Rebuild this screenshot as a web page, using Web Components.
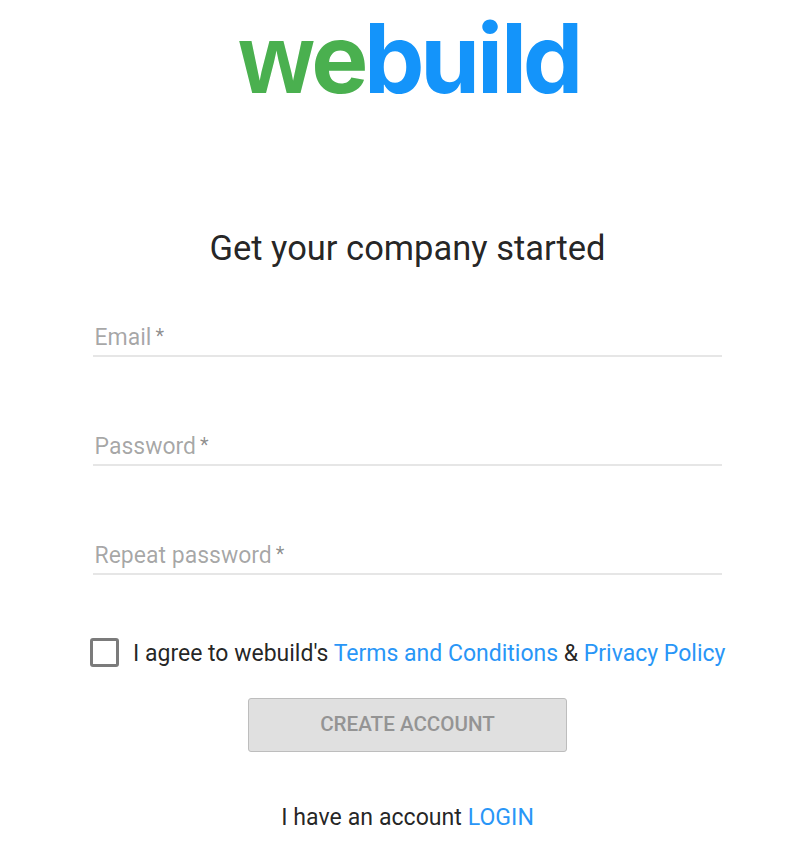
<!DOCTYPE html>
<html lang="en">
<head>
<meta charset="utf-8">
<title>webuild</title>
<style>
  body {
    margin: 0;
    background: #ffffff;
    font-family: Roboto, sans-serif;
    color: rgba(0, 0, 0, 0.87);
  }
</style>
</head>
<body>
<signup-page>
  <brand-logo slot="logo"></brand-logo>
  <span slot="title">Get your company started</span>
  <text-field label="Email"></text-field>
  <text-field label="Password" type="password"></text-field>
  <text-field label="Repeat password" type="password"></text-field>
  <check-box>I agree to webuild's <text-link>Terms and Conditions</text-link> &amp; <text-link>Privacy Policy</text-link></check-box>
  <submit-button>CREATE ACCOUNT</submit-button>
  <span slot="footer">I have an account <text-link>LOGIN</text-link></span>
</signup-page>
<script>
class BrandLogo extends HTMLElement {
  connectedCallback() {
    this.attachShadow({ mode: 'open' });
    this.shadowRoot.innerHTML = `
      <style>
        :host {
            display: block;
            width: 340px;
            height: 80px;
        }
        svg {
            display: block;
            overflow: visible;
        }
        text {
            font: 700 96px Inter, sans-serif;
        }
        .we {
            fill: #4ab04f;
        }
        .w {
            font: 700 98px "Liberation Sans", sans-serif;
        }
        .build {
            fill: #1494fa;
        }
      </style>
      <svg width="340" height="80" viewBox="239 18 340 80" role="img">
        <text class="we" y="92.5"><tspan class="w" x="239.5" textLength="74" lengthAdjust="spacingAndGlyphs">w</tspan><tspan x="311.3">e</tspan></text>
        <text class="build" x="364 420.3 477 501 522.8" y="92.5">build</text>
      </svg>
    `;
  }
}
customElements.define('brand-logo', BrandLogo);

class TextLink extends HTMLElement {
  connectedCallback() {
    this.attachShadow({ mode: 'open' });
    this.shadowRoot.innerHTML = `
      <style>
        :host {
            display: inline;
        }
        a {
            color: #2996f7;
            text-decoration: none;
        }
      </style>
      <a href="#"><slot></slot></a>
    `;
  }
}
customElements.define('text-link', TextLink);

class TextField extends HTMLElement {
  connectedCallback() {
    const type = this.getAttribute('type') || 'text';
    this.attachShadow({ mode: 'open' });
    this.shadowRoot.innerHTML = `
      <style>
        :host {
            display: block;
            margin-bottom: 70px;
        }
        :host(:last-of-type) {
            margin-bottom: 62px;
        }
        label {
            display: grid;
            height: 35px;
            padding: 2px 0 0 1.5px;
            border-bottom: 2px solid #e6e6e6;
            font-size: 23px;
            line-height: 36px;
            color: rgba(0, 0, 0, 0.36);
        }
        span, input {
            grid-area: 1 / 1;
        }
        small {
            margin-left: -1px;
            font-size: 20px;
            line-height: 1;
            vertical-align: 2px;
            color: rgba(0, 0, 0, 0.45);
        }
        input {
            border: 0;
            padding: 0;
            background: none;
            font: inherit;
            outline: none;
        }
      </style>
      <label><span>${this.getAttribute('label')}<small> *</small></span><input type="${type}"></label>
    `;
  }
}
customElements.define('text-field', TextField);

class CheckBox extends HTMLElement {
  connectedCallback() {
    this.attachShadow({ mode: 'open' });
    this.shadowRoot.innerHTML = `
      <style>
        :host {
            display: flex;
            align-items: center;
            gap: 14px;
            height: 30px;
            margin-left: -3px;
            font-size: 23px;
            line-height: 30px;
            white-space: nowrap;
        }
        .box {
            flex: none;
            box-sizing: border-box;
            width: 29px;
            height: 29px;
            border: 3px solid #7b7b7b;
            border-radius: 3px;
        }
        .text {
            padding-top: 3px;
        }
      </style>
      <span class="box" role="checkbox" aria-checked="false"></span>
      <span class="text"><slot></slot></span>
    `;
  }
}
customElements.define('check-box', CheckBox);

class SubmitButton extends HTMLElement {
  connectedCallback() {
    this.attachShadow({ mode: 'open' });
    this.shadowRoot.innerHTML = `
      <style>
        :host {
            display: block;
            width: 319px;
            margin: 31px auto 0;
        }
        button {
            display: block;
            width: 100%;
            height: 54px;
            padding: 0 0 3px;
            border: 1px solid #bdbdbd;
            border-radius: 3px;
            background: #e0e0e0;
            color: #949494;
            font: 500 20.6px Roboto, sans-serif;
        }
      </style>
      <button disabled><slot></slot></button>
    `;
  }
}
customElements.define('submit-button', SubmitButton);

class SignupPage extends HTMLElement {
  connectedCallback() {
    this.attachShadow({ mode: 'open' });
    this.shadowRoot.innerHTML = `
      <style>
        :host {
            display: block;
            box-sizing: border-box;
            width: 629px;
            height: 864px;
            margin-left: 93px;
            padding-top: 18px;
        }
        header {
            display: flex;
            justify-content: center;
            padding-left: 3px;
        }
        h1 {
            margin: 129px 0 49px;
            font-size: 34.5px;
            font-weight: 400;
            line-height: 42px;
            text-align: center;
        }
        footer {
            margin-top: 51px;
            font-size: 23.1px;
            line-height: 30px;
            word-spacing: 0.2px;
            text-align: center;
        }
      </style>
      <header><slot name="logo"></slot></header>
      <h1><slot name="title"></slot></h1>
      <main><slot></slot></main>
      <footer><slot name="footer"></slot></footer>
    `;
  }
}
customElements.define('signup-page', SignupPage);
</script>
</body>
</html>
